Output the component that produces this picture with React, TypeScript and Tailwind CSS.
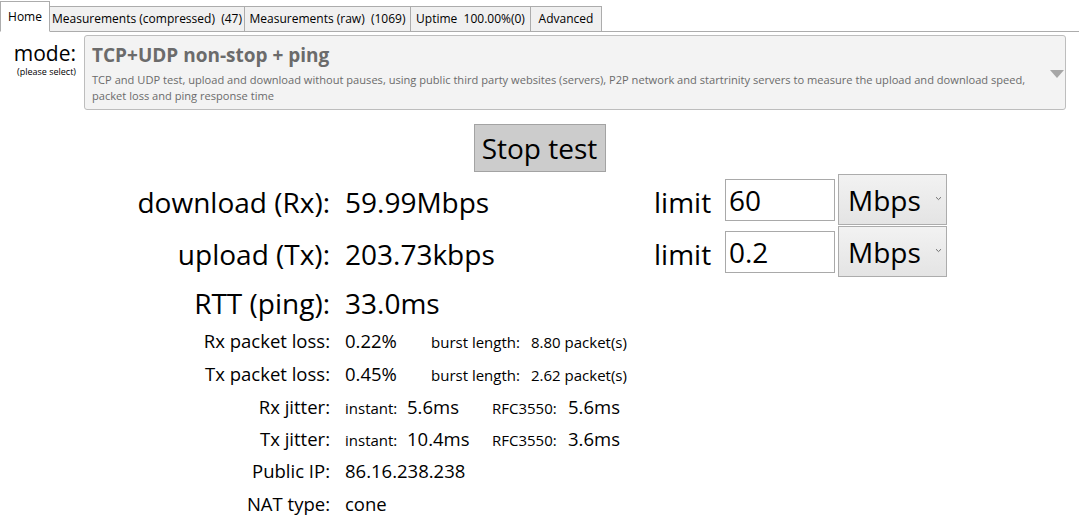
import React from 'react';

const font = { fontFamily: '"Open Sans", "Noto Sans", sans-serif' };

const tabs = [
  { label: 'Home', w: 'w-[50px]', active: true },
  { label: 'Measurements (compressed)  (47)', w: 'w-[196px]' },
  { label: 'Measurements (raw)  (1069)', w: 'w-[167px]' },
  { label: 'Uptime  100.00%(0)', w: 'w-[121px]' },
  { label: 'Advanced', w: 'w-[72px]' },
];

const Chevron: React.FC = () => (
  <svg width="7" height="5" viewBox="0 0 7 5" className="ml-auto mr-[4px] mb-[3px]">
    <path d="M1 1.2 L3.5 3.6 L6 1.2" fill="none" stroke="#707070" strokeWidth="1" />
  </svg>
);

const LimitBox: React.FC<{ value: string }> = ({ value }) => (
  <div className="flex items-center h-full">
    <span className="w-[71px] text-[28px] leading-none pt-[3px]">limit</span>
    <div className="w-[110px] h-[42px] border border-[#a9a9a9] bg-white flex items-center pl-[3px] text-[28px] leading-none">
      {value}
    </div>
    <div className="ml-[3px] w-[109px] h-[51px] border border-[#acacac] bg-gradient-to-b from-[#f2f2f2] to-[#e4e4e4] flex items-center pl-[9px] text-[28px] leading-none self-start">
      Mbps
      <Chevron />
    </div>
  </div>
);

const BigRow: React.FC<{ label: string; value: string; h: string; limit?: string }> = ({ label, value, h, limit }) => (
  <div className={`flex items-center ${h}`}>
    <span className="w-[330px] shrink-0 text-right text-[28px] leading-none pt-[3px]">{label}</span>
    <span className="ml-[15px] w-[309px] shrink-0 text-[28px] leading-none pt-[3px]">{value}</span>
    {limit && <LimitBox value={limit} />}
  </div>
);

const SmallRow: React.FC<{ label: string; h: string; children: React.ReactNode }> = ({ label, h, children }) => (
  <div className={`flex items-center ${h}`}>
    <div className="flex items-baseline pt-[1px]">
      <span className="w-[330px] shrink-0 text-right text-[18.5px]">{label}</span>
      <div className="ml-[15px] flex items-baseline">{children}</div>
    </div>
  </div>
);

export default function App() {
  return (
    <div className="w-[1079px] h-[519px] bg-white text-black overflow-hidden" style={font}>
      {/* tab strip */}
      <div className="flex items-end h-[32px] border-b border-[#acacac]">
        {tabs.map((t) => (
          <div
            key={t.label}
            className={`${t.w} flex items-center justify-center whitespace-pre text-[12px] border border-[#acacac] -ml-px first:ml-0 ${
              t.active ? 'h-[31px] bg-white border-b-white -mb-px z-10' : 'h-[25px] bg-[#f0f0f0] border-b-0'
            }`}
          >
            {t.label}
          </div>
        ))}
      </div>

      {/* mode selector */}
      <div className="flex mt-[3px] pr-[13px]">
        <div className="w-[84px] shrink-0 flex flex-col items-end pr-[8px] pt-[6px]">
          <span className="text-[21px] leading-[24px]">mode:</span>
          <span className="text-[9px] leading-[12px] mt-[1px] whitespace-nowrap">(please select)</span>
        </div>
        <div className="flex-1 min-w-0 h-[75px] bg-[#f3f3f3] border border-[#bdbdbd] rounded-[3px] flex items-start pl-[7px] pr-[1px] pt-[7px] text-[#6b6b6b]">
          <div className="flex-1 min-w-0">
            <div className="text-[19px] font-bold leading-[24px]">TCP+UDP non-stop + ping</div>
            <div className="text-[11.1px] leading-[16px] mt-[5px] whitespace-nowrap">
              TCP and UDP test, upload and download without pauses, using public third party websites (servers), P2P network and startrinity servers to measure the upload and download speed,
              <br />
              packet loss and ping response time
            </div>
          </div>
          <svg width="14" height="8" viewBox="0 0 14 8" className="shrink-0 ml-[6px] mt-[27px]">
            <path d="M0 0 H14 L7 8 Z" fill="#a6a6a6" />
          </svg>
        </div>
      </div>

      {/* action */}
      <div className="flex justify-center mt-[14px]">
        <button className="w-[132px] h-[48px] bg-[#cccccc] border border-[#a3a3a3] text-[28px] leading-none">
          Stop test
        </button>
      </div>

      {/* results */}
      <div className="mt-[2px] flex flex-col">
        <BigRow label="download (Rx):" value="59.99Mbps" h="h-[52px]" limit="60" />
        <BigRow label="upload (Tx):" value="203.73kbps" h="h-[52px]" limit="0.2" />
        <BigRow label="RTT (ping):" value="33.0ms" h="h-[46px]" />
        <SmallRow label="Rx packet loss:" h="h-[33px]">
          <span className="w-[86px] text-[18.5px]">0.22%</span>
          <span className="w-[100px] text-[15px] whitespace-pre">burst length:</span>
          <span className="text-[15px]">8.80 packet(s)</span>
        </SmallRow>
        <SmallRow label="Tx packet loss:" h="h-[33px]">
          <span className="w-[86px] text-[18.5px]">0.45%</span>
          <span className="w-[100px] text-[15px] whitespace-pre">burst length:</span>
          <span className="text-[15px]">2.62 packet(s)</span>
        </SmallRow>
        <SmallRow label="Rx jitter:" h="h-[32px]">
          <span className="w-[62px] text-[15px]">instant:</span>
          <span className="w-[85px] text-[18.5px]">5.6ms</span>
          <span className="w-[76px] text-[15px]">RFC3550:</span>
          <span className="text-[18.5px]">5.6ms</span>
        </SmallRow>
        <SmallRow label="Tx jitter:" h="h-[32px]">
          <span className="w-[62px] text-[15px]">instant:</span>
          <span className="w-[85px] text-[18.5px]">10.4ms</span>
          <span className="w-[76px] text-[15px]">RFC3550:</span>
          <span className="text-[18.5px]">3.6ms</span>
        </SmallRow>
        <SmallRow label="Public IP:" h="h-[33px]">
          <span className="text-[18.5px]">86.16.238.238</span>
        </SmallRow>
        <SmallRow label="NAT type:" h="h-[33px]">
          <span className="text-[18.5px]">cone</span>
        </SmallRow>
      </div>
    </div>
  );
}
